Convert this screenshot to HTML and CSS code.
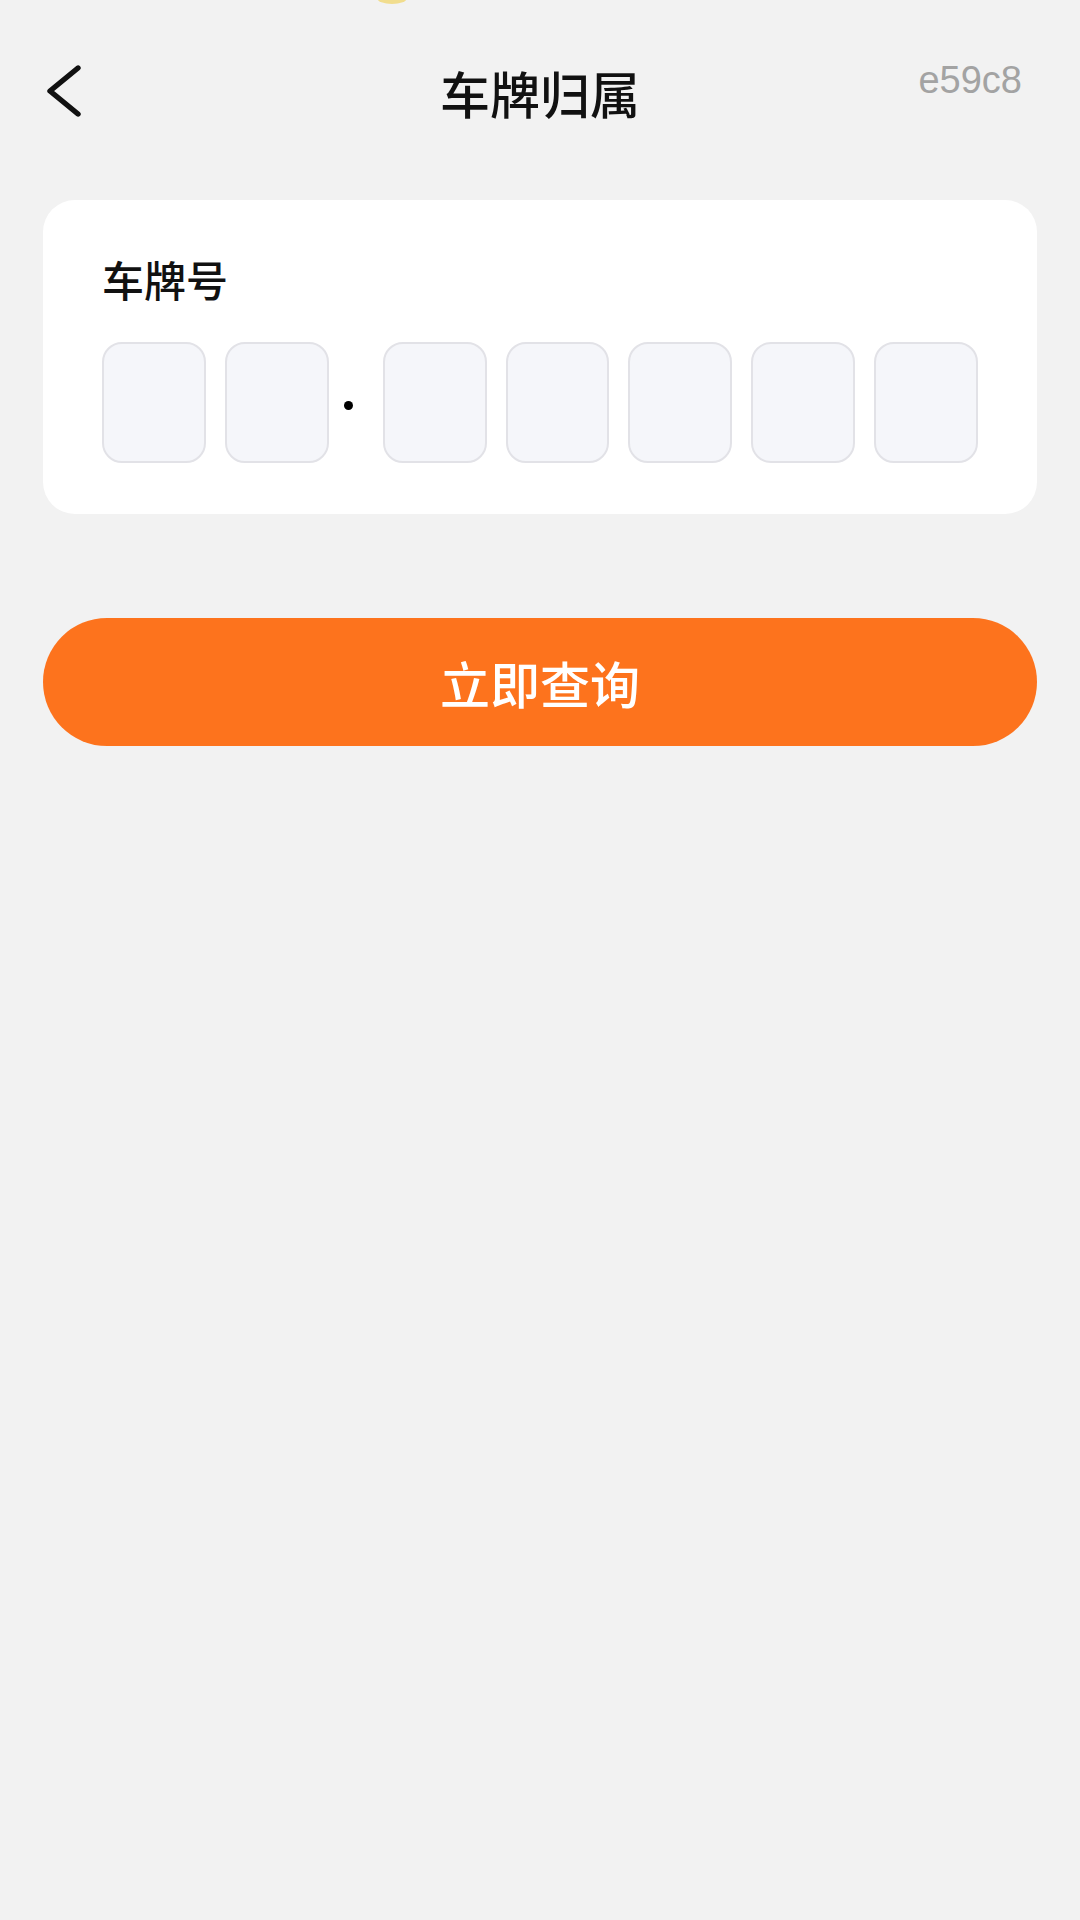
FILE: index.html
```html
<!DOCTYPE html>
<html lang="zh-CN">
<head>
<meta charset="utf-8">
<title>车牌归属</title>
<link rel="stylesheet" href="styles.css">
</head>
<body>
<div class="page">
  <div class="notch"></div>
  <header class="header">
    <div class="back">
      <svg width="40" height="52" viewBox="0 0 40 52" aria-hidden="true">
        <path d="M34 3 L6 26 L34 49" fill="none" stroke="#111" stroke-width="5.4" stroke-linecap="round" stroke-linejoin="round"/>
      </svg>
    </div>
    <h1 class="title">车牌归属</h1>
    <div class="code">e59c8</div>
  </header>

  <section class="card">
    <div class="label">车牌号</div>
    <div class="plate">
      <div class="cell"></div>
      <div class="cell"></div>
      <div class="sep"><span class="dot"></span></div>
      <div class="cell"></div>
      <div class="cell"></div>
      <div class="cell"></div>
      <div class="cell"></div>
      <div class="cell"></div>
    </div>
  </section>

  <button class="query">立即查询</button>
</div>
</body>
</html>
```

FILE: styles.css
```css
* { box-sizing: border-box; }

html, body {
  margin: 0;
  padding: 0;
  background: #f2f2f2;
}

body {
  font-family: "Noto Sans CJK SC", "Noto Sans", sans-serif;
  color: #111;
}

.page {
  position: relative;
  width: 1080px;
  min-height: 1920px;
  background: #f2f2f2;
}

.notch {
  position: absolute;
  top: -8px;
  left: 377px;
  width: 30px;
  height: 12px;
  border-radius: 50%;
  background: #f1dd8e;
}

.header {
  display: grid;
  grid-template-columns: 1fr auto 1fr;
  height: 200px;
}

.back {
  align-self: start;
  justify-self: start;
  margin-top: 65px;
  margin-left: 44px;
  line-height: 0;
}

.title {
  margin: 67px 0 0;
  font-size: 50px;
  line-height: 50px;
  font-weight: 500;
  color: #111;
  align-self: start;
}

.code {
  justify-self: end;
  align-self: start;
  margin-top: 61px;
  margin-right: 58px;
  font-family: "Liberation Sans", Arial, sans-serif;
  font-size: 38px;
  line-height: 38px;
  color: #a3a3a3;
}

.card {
  margin: 0 43px;
  background: #fff;
  border-radius: 32px;
  padding: 58px 59px 51px;
}

.label {
  font-size: 42px;
  line-height: 42px;
  font-weight: 500;
  color: #111;
}

.plate {
  display: flex;
  gap: 19px;
  margin-top: 42px;
}

.cell {
  width: 104px;
  height: 121px;
  background: #f5f6fa;
  border: 2px solid #e2e2e7;
  border-radius: 20px;
}

.sep {
  width: 16px;
  display: flex;
  align-items: center;
  justify-content: flex-start;
}

.dot {
  width: 9px;
  height: 9px;
  margin-left: -4px;
  margin-top: 6px;
  border-radius: 50%;
  background: #000;
}

.query {
  display: block;
  width: 994px;
  height: 128px;
  margin: 104px 43px 0;
  border: none;
  border-radius: 64px;
  background: #fd731d;
  color: #fff;
  font-family: "Noto Sans CJK SC", "Noto Sans", sans-serif;
  font-size: 50px;
  font-weight: 500;
  line-height: 128px;
  padding: 0;
  text-align: center;
}
```
